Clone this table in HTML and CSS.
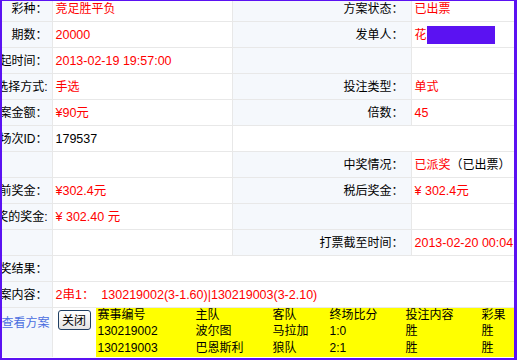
FILE: index.html
```html
<!DOCTYPE html>
<html lang="zh">
<head>
<meta charset="utf-8">
<title>方案详情</title>
<link rel="stylesheet" href="styles.css">
</head>
<body>
<div class="frame">
  <table class="detail">
    <colgroup>
      <col class="c1"><col class="c2"><col class="c3"><col class="c4">
    </colgroup>
    <tr>
      <td class="lab"><div class="clip">彩种：</div></td>
      <td class="val red">竞足胜平负</td>
      <td class="lab lab2">方案状态：</td>
      <td class="val red">已出票</td>
    </tr>
    <tr>
      <td class="lab"><div class="clip">期数：</div></td>
      <td class="val red n">20000</td>
      <td class="lab lab2">发单人：</td>
      <td class="val red">花<span class="redact"></span></td>
    </tr>
    <tr>
      <td class="lab"><div class="clip">发起时间：</div></td>
      <td class="val red n">2013-02-19 19:57:00</td>
      <td class="lab lab2"></td>
      <td class="val"></td>
    </tr>
    <tr>
      <td class="lab"><div class="clip">选择方式:</div></td>
      <td class="val red">手选</td>
      <td class="lab lab2">投注类型：</td>
      <td class="val red">单式</td>
    </tr>
    <tr>
      <td class="lab"><div class="clip">方案金额：</div></td>
      <td class="val red n">¥90元</td>
      <td class="lab lab2">倍数：</td>
      <td class="val red n">45</td>
    </tr>
    <tr>
      <td class="lab"><div class="clip">比赛场次ID：</div></td>
      <td class="val n">179537</td>
      <td class="val" colspan="2"></td>
    </tr>
    <tr>
      <td class="lab"><div class="clip"></div></td>
      <td class="val"></td>
      <td class="lab lab2">中奖情况：</td>
      <td class="val"><span class="red">已派奖</span>（已出票）</td>
    </tr>
    <tr>
      <td class="lab"><div class="clip">税前奖金：</div></td>
      <td class="val red n">¥302.4元</td>
      <td class="lab lab2">税后奖金：</td>
      <td class="val red n">¥ 302.4元</td>
    </tr>
    <tr>
      <td class="lab"><div class="clip">每人中奖的奖金:</div></td>
      <td class="val red n">¥ 302.40 元</td>
      <td class="lab lab2"></td>
      <td class="val"></td>
    </tr>
    <tr>
      <td class="lab"><div class="clip"></div></td>
      <td class="val"></td>
      <td class="lab lab2">打票截至时间：</td>
      <td class="val red n nowrap">2013-02-20 00:04:00</td>
    </tr>
    <tr>
      <td class="lab"><div class="clip">开奖结果：</div></td>
      <td class="val" colspan="3"></td>
    </tr>
    <tr>
      <td class="lab"><div class="clip">方案内容：</div></td>
      <td class="val red n" colspan="3">2串1：&nbsp; 130219002(3-1.60)|130219003(3-2.10)</td>
    </tr>
    <tr class="last">
      <td class="lab top"><div class="clip"><a class="link" href="#">查看方案</a></div></td>
      <td class="val top" colspan="3">
        <div class="tools">
          <button class="btn" type="button">关闭</button>
          <table class="match">
            <tr><td class="m1">赛事编号</td><td class="m2">主队</td><td class="m3">客队</td><td class="m4">终场比分</td><td class="m5">投注内容</td><td class="m6">彩果</td></tr>
            <tr><td>130219002</td><td>波尔图</td><td>马拉加</td><td>1:0</td><td>胜</td><td>胜</td></tr>
            <tr><td>130219003</td><td>巴恩斯利</td><td>狼队</td><td>2:1</td><td>胜</td><td>胜</td></tr>
          </table>
        </div>
      </td>
    </tr>
  </table>
</div>
</body>
</html>
```
FILE: styles.css
```css
html, body {
  margin: 0;
  padding: 0;
  background: #ffffff;
}
body {
  font-family: "Liberation Sans", "Noto Sans CJK SC", sans-serif;
  font-size: 12px;
  color: #000;
}
.frame {
  width: 517px;
  height: 360px;
  box-sizing: border-box;
  border-style: solid;
  border-color: #5b12f2;
  border-width: 1px 3px 2px 2px;
  overflow: hidden;
}
.detail {
  border-collapse: collapse;
  table-layout: fixed;
  width: 513px;
  margin-top: -6px;
}
.c1 { width: 50px; }
.c2 { width: 180px; }
.c3 { width: 179px; }
.c4 { width: 104px; }
.detail > tbody > tr > td,
.detail > tr > td {
  border: 1px solid #e8e8e8;
  height: 25px;
  padding: 0;
  line-height: 16px;
  vertical-align: middle;
  overflow: hidden;
}
.detail td:first-child { border-left: none; }
.lab {
  background: #f5f8fc;
  text-align: right;
}
.lab2 { padding-right: 7px !important; }
.clip {
  display: flex;
  justify-content: flex-end;
  white-space: nowrap;
  overflow: hidden;
  padding-right: 4px;
}
.val {
  background: #ffffff;
  padding-left: 3px !important;
  white-space: nowrap;
}
.red { color: #ff0000; }
.n { font-size: 12.5px; }
.nowrap { white-space: nowrap; }
.redact {
  display: inline-block;
  width: 68px;
  height: 18px;
  background: #5b12f2;
  vertical-align: -5px;
}
.detail tr.last > td {
  height: 49px;
  border-bottom: none;
}
.detail td.top { vertical-align: top; }
.lab.top .clip { padding-top: 7px; padding-right: 2px; }
.link {
  color: #4a6ee0;
  text-decoration: none;
}
.tools {
  display: flex;
  align-items: flex-start;
  gap: 5px;
  margin-left: 2px;
}
.btn {
  flex: none;
  margin-top: 2px;
  width: 33px;
  height: 20px;
  padding: 0;
  font-family: "Noto Sans CJK SC", sans-serif;
  font-size: 12px;
  line-height: 16px;
  color: #000;
  background: linear-gradient(#ffffff, #e4e4e4);
  border: 1px solid #1f3f63;
  border-radius: 3px;
}
.match {
  border-collapse: collapse;
  background: #ffff00;
  width: 440px;
  flex: none;
  margin-top: -1px;
}
.match td {
  padding: 0 0 0 2px;
  height: 16.5px;
  line-height: 15px;
  font-size: 12px;
  white-space: nowrap;
  border: none;
}
.m1 { width: 96px; }
.m2 { width: 75px; }
.m3 { width: 55px; }
.m4 { width: 74px; }
.m5 { width: 74px; }
```
